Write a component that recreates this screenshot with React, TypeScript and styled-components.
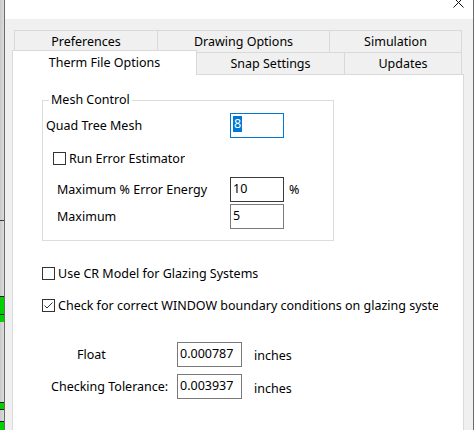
import React from "react";
import styled, { createGlobalStyle } from "styled-components";

const Global = createGlobalStyle`
  html, body { margin: 0; padding: 0; background: #f0f0f0; }
  body {
    font-family: "Noto Sans", "Open Sans", sans-serif;
    font-size: 12.5px;
    color: #000;
  }
  #root { width: 474px; height: 430px; overflow: hidden; }
  * { box-sizing: border-box; }
`;

const Screen = styled.div`
  display: flex;
  width: 474px;
  height: 430px;
  overflow: hidden;
`;

const BackStrip = styled.div`
  width: 4px;
  flex: none;
  display: flex;
  flex-direction: column;
  background: linear-gradient(to right, #c9c9c9, #dcdcdc);
`;

const StripSeg = styled.div<{ $h: number; $c: string }>`
  height: ${(p) => p.$h}px;
  flex: none;
  background: ${(p) => p.$c};
`;

const Dialog = styled.div`
  flex: 1;
  display: flex;
  flex-direction: column;
  border-left: 1px solid #6b6b6b;
  border-right: 1px solid #6b6b6b;
  background: #f0f0f0;
  min-width: 0;
`;

const TitleBar = styled.div`
  height: 19px;
  flex: none;
  background: #fff;
  display: flex;
  justify-content: flex-end;
  align-items: flex-start;
  padding-right: 9px;
`;

const Body = styled.div`
  flex: 1;
  display: flex;
  flex-direction: column;
  padding: 11px 9px 0 7px;
  min-height: 0;
`;

const TabRow = styled.div<{ $indent: number }>`
  display: flex;
  align-items: flex-start;
  height: 22px;
  flex: none;
  padding-left: ${(p) => p.$indent}px;
`;

const Tab = styled.div<{ $w: number; $active?: boolean }>`
  width: ${(p) => p.$w}px;
  height: ${(p) => (p.$active ? 25 : 22)}px;
  margin-top: ${(p) => (p.$active ? -2 : 0)}px;
  position: relative;
  z-index: ${(p) => (p.$active ? 2 : 1)};
  display: flex;
  align-items: center;
  justify-content: center;
  padding-bottom: ${(p) => (p.$active ? 2 : 1)}px;
  background: ${(p) => (p.$active ? "#fff" : "#f0f0f0")};
  border: 1px solid #d9d9d9;
  border-bottom: none;
  & + & { margin-left: -1px; }
  white-space: nowrap;
`;

const Panel = styled.div`
  flex: 1;
  background: #fff;
  border: 1px solid #d9d9d9;
  border-bottom: none;
  display: flex;
  flex-direction: column;
  min-height: 0;
`;

const GroupBox = styled.div`
  position: relative;
  margin: 25px 0 0 29px;
  width: 292px;
  height: 141px;
  flex: none;
  border: 1px solid #dcdcdc;
  padding-top: 12px;
  display: flex;
  flex-direction: column;
`;

const GroupLegend = styled.span`
  position: absolute;
  top: -9px;
  left: 6px;
  padding: 0 2px;
  line-height: 16px;
  background: #fff;
`;

const FieldRow = styled.div<{ $top: number; $cols: string }>`
  display: grid;
  grid-template-columns: ${(p) => p.$cols};
  align-items: center;
  height: 25px;
  flex: none;
  margin-top: ${(p) => p.$top}px;
`;

const Label = styled.span<{ $indent: number }>`
  padding-left: ${(p) => p.$indent}px;
  white-space: nowrap;
`;

const Unit = styled.span<{ $gap: number; $dy?: number }>`
  padding-left: ${(p) => p.$gap}px;
  position: relative;
  top: ${(p) => p.$dy ?? 0}px;
  white-space: nowrap;
`;

const TextBox = styled.div<{ $w: number; $tone: "blue" | "dark" | "normal" }>`
  width: ${(p) => p.$w}px;
  height: 25px;
  border: 1px solid
    ${(p) => (p.$tone === "blue" ? "#0078d7" : p.$tone === "dark" ? "#3a3a3a" : "#7a7a7a")};
  background: #fff;
  display: flex;
  align-items: center;
  padding: 0 2px 3px 2px;
  white-space: nowrap;
`;

const Selected = styled.span`
  background: #0078d7;
  color: #fff;
  line-height: 16px;
  padding: 0 1px;
`;

const CheckRow = styled.div<{ $top: number; $indent: number }>`
  display: flex;
  align-items: center;
  height: 13px;
  flex: none;
  margin-top: ${(p) => p.$top}px;
  padding-left: ${(p) => p.$indent}px;
`;

const Box = styled.div`
  width: 13px;
  height: 13px;
  flex: none;
  border: 1px solid #333;
  background: #fff;
  display: flex;
`;

const CheckText = styled.span<{ $clip?: number }>`
  margin-left: 3px;
  white-space: nowrap;
  overflow: hidden;
  line-height: 17px;
  ${(p) => (p.$clip ? `width: ${p.$clip}px;` : "")}
`;

const CheckBox = ({ checked }: { checked?: boolean }) => (
  <Box>
    {checked && (
      <svg width="11" height="11" viewBox="0 0 11 11">
        <polyline points="1.5,5.5 4,8 9.5,2.5" fill="none" stroke="#333" strokeWidth="1" />
      </svg>
    )}
  </Box>
);

const stripSegments: [number, string][] = [
  [220, "transparent"],
  [1, "#3a3a3a"],
  [75, "transparent"],
  [1, "#1a1a1a"],
  [17, "#00d200"],
  [1, "#1a1a1a"],
  [7, "#00d200"],
  [80, "transparent"],
  [1, "#1a1a1a"],
  [6, "#00d200"],
  [1, "#1a1a1a"],
  [11, "transparent"],
  [1, "#1a1a1a"],
  [8, "#00d200"],
];

export default function App() {
  return (
    <>
      <Global />
      <Screen>
        <BackStrip>
          {stripSegments.map(([h, c], i) => (
            <StripSeg key={i} $h={h} $c={c} />
          ))}
        </BackStrip>
        <Dialog>
          <TitleBar>
            <svg width="11" height="8" viewBox="0 0 11 8">
              <line x1="0.5" y1="-2.5" x2="10.5" y2="7.5" stroke="#111" strokeWidth="1" />
              <line x1="10.5" y1="-2.5" x2="0.5" y2="7.5" stroke="#111" strokeWidth="1" />
            </svg>
          </TitleBar>
          <Body>
            <TabRow $indent={2}>
              <Tab $w={144}>Preferences</Tab>
              <Tab $w={173}>Drawing Options</Tab>
              <Tab $w={133}>Simulation</Tab>
            </TabRow>
            <TabRow $indent={0}>
              <Tab $w={185} $active>
                Therm File Options
              </Tab>
              <Tab $w={149}>Snap Settings</Tab>
              <Tab $w={118}>Updates</Tab>
            </TabRow>
            <Panel>
              <GroupBox>
                <GroupLegend>Mesh Control</GroupLegend>
                <FieldRow $top={0} $cols="187px 54px auto">
                  <Label $indent={3}>Quad Tree Mesh</Label>
                  <TextBox $w={54} $tone="blue">
                    <Selected>8</Selected>
                  </TextBox>
                </FieldRow>
                <CheckRow $top={14} $indent={10}>
                  <CheckBox />
                  <CheckText>Run Error Estimator</CheckText>
                </CheckRow>
                <FieldRow $top={12} $cols="187px 54px auto">
                  <Label $indent={14}>Maximum % Error Energy</Label>
                  <TextBox $w={54} $tone="dark">10</TextBox>
                  <Unit $gap={5}>%</Unit>
                </FieldRow>
                <FieldRow $top={2} $cols="187px 54px auto">
                  <Label $indent={14}>Maximum</Label>
                  <TextBox $w={54} $tone="normal">5</TextBox>
                </FieldRow>
              </GroupBox>
              <CheckRow $top={26} $indent={29}>
                <CheckBox />
                <CheckText>Use CR Model for Glazing Systems</CheckText>
              </CheckRow>
              <CheckRow $top={19} $indent={29}>
                <CheckBox checked />
                <CheckText $clip={380}>
                  Check for correct WINDOW boundary conditions on glazing systems
                </CheckText>
              </CheckRow>
              <FieldRow $top={30} $cols="164px 65px auto">
                <Label $indent={64}>Float</Label>
                <TextBox $w={65} $tone="normal">0.000787</TextBox>
                <Unit $gap={12} $dy={1}>inches</Unit>
              </FieldRow>
              <FieldRow $top={7} $cols="164px 65px auto">
                <Label $indent={38}>Checking Tolerance:</Label>
                <TextBox $w={65} $tone="normal">0.003937</TextBox>
                <Unit $gap={12} $dy={2}>inches</Unit>
              </FieldRow>
            </Panel>
          </Body>
        </Dialog>
      </Screen>
    </>
  );
}
